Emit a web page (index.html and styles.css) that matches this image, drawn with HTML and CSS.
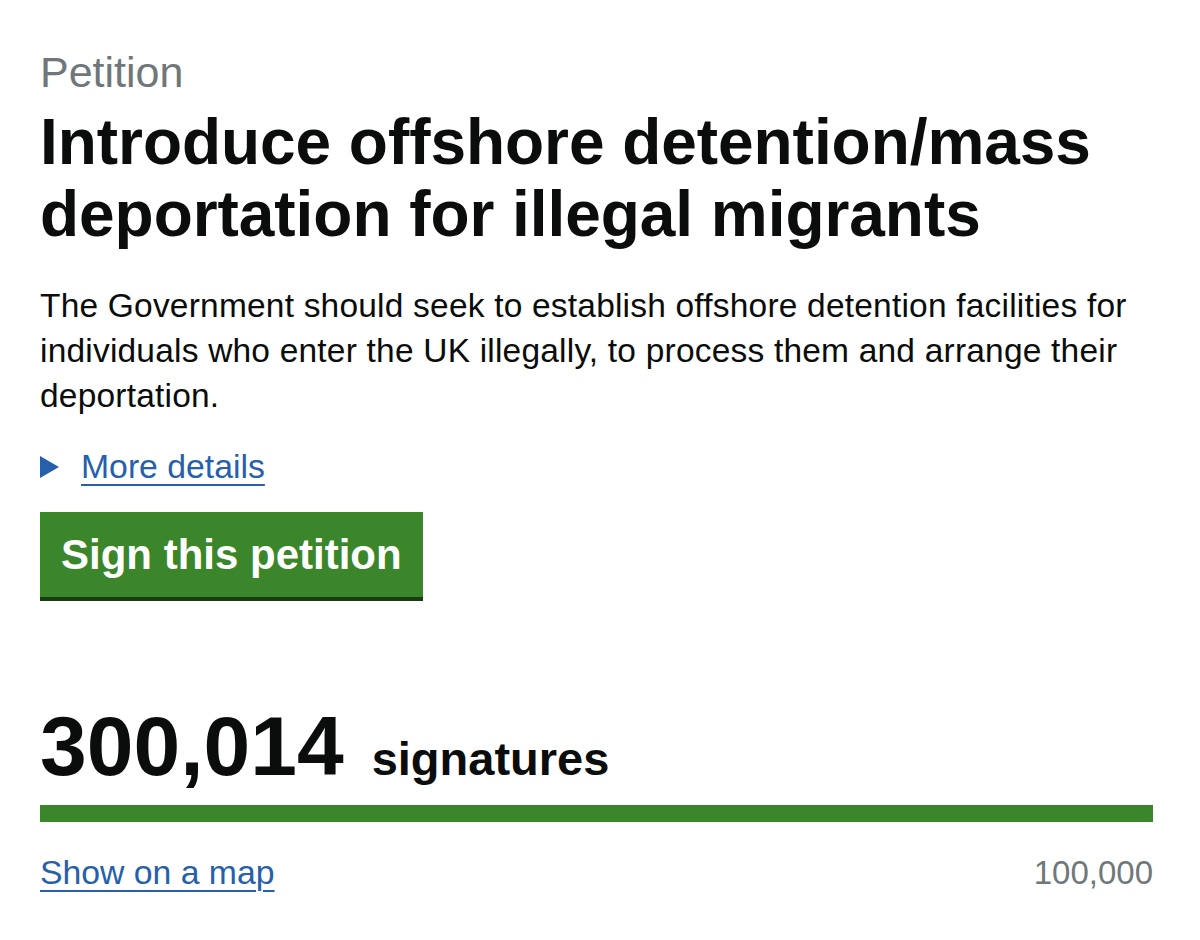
FILE: index.html
```html
<!DOCTYPE html>
<html lang="en">
<head>
<meta charset="utf-8">
<title>Petition</title>
<link rel="stylesheet" href="styles.css">
</head>
<body>
<main class="page">
  <p class="caption">Petition</p>
  <h1 class="title">Introduce offshore detention/mass deportation for illegal migrants</h1>
  <p class="summary">The Government should seek to establish offshore detention facilities for individuals who enter the UK illegally, to process them and arrange their deportation.</p>
  <div class="details">
    <svg class="details-arrow" width="20" height="22" viewBox="0 0 20 22" aria-hidden="true"><polygon points="0,0 19,11 0,22" fill="#2660aa"/></svg>
    <a class="link" href="#">More details</a>
  </div>
  <div class="actions">
    <a class="button" href="#">Sign this petition</a>
  </div>
  <div class="count"><span class="count-number">300,014</span><span class="count-label">signatures</span></div>
  <div class="progress"><div class="progress-fill" style="width:100%"></div></div>
  <div class="progress-meta">
    <a class="link" href="#">Show on a map</a>
    <span class="target">100,000</span>
  </div>
</main>
</body>
</html>
```

FILE: styles.css
```css
html, body {
  margin: 0;
  padding: 0;
  background: #ffffff;
}

body {
  font-family: "Liberation Sans", Arial, Helvetica, sans-serif;
  color: #0b0c0c;
}

.page {
  padding: 47px 47px 0 40px;
}

.caption {
  margin: 0;
  font-size: 43px;
  line-height: 50px;
  color: #6f777b;
}

.title {
  margin: 9px 0 0;
  font-size: 64px;
  line-height: 72px;
  font-weight: 700;
  letter-spacing: -0.05px;
}

.summary {
  margin: 33px 0 0;
  font-size: 33.5px;
  line-height: 45px;
  letter-spacing: 0.2px;
}

.details {
  margin-top: 26px;
  display: flex;
  align-items: center;
  gap: 21px;
  height: 45px;
}

.details-arrow {
  display: block;
  flex: none;
}

.link {
  color: #2660aa;
  text-decoration: underline;
  text-decoration-thickness: 2px;
  text-underline-offset: 6px;
  font-size: 33.75px;
  line-height: 45px;
}

.actions {
  margin-top: 23px;
  display: flex;
}

.button {
  display: block;
  background: #3b862a;
  color: #ffffff;
  font-size: 42px;
  line-height: 85px;
  font-weight: 700;
  padding: 0 21px;
  text-decoration: none;
  box-shadow: 0 4px 0 #173d10;
}

.count {
  margin-top: 107px;
  height: 84px;
  line-height: 84px;
  font-weight: 700;
  display: flex;
  align-items: baseline;
}

.count-number {
  font-size: 84px;
}

.count-label {
  font-size: 47px;
  line-height: 47px;
  margin-left: 28px;
}

.progress {
  margin-top: 17px;
  height: 17px;
  background: #dee0e2;
}

.progress-fill {
  height: 100%;
  background: #3b862a;
}

.progress-meta {
  margin-top: 28px;
  display: flex;
  justify-content: space-between;
  align-items: baseline;
  line-height: 45px;
}

.target {
  font-size: 33px;
  color: #6f777b;
}
```
